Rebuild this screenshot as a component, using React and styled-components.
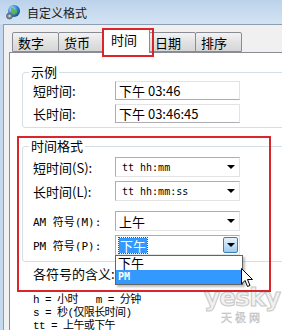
import React from 'react';
import styled, {createGlobalStyle} from 'styled-components';

const GlobalStyle = createGlobalStyle`
    html, body {
        margin: 0;
        padding: 0;
        background: #f0f0f0;
    }

    body {
        width: 282px;
        height: 330px;
        overflow: hidden;
        font-family: 'Noto Sans CJK SC', 'Liberation Sans', sans-serif;
        font-size: 12px;
        color: #000;
    }
`

const Window = styled.div`
    position: relative;
    width: 282px;
    height: 330px;
    overflow: hidden;
    background: #c4d8ef;
`

const TitleBar = styled.div`
    display: flex;
    align-items: center;
    gap: 6px;
    height: 24px;
    padding-left: 5px;
    background: linear-gradient(#bcd2eb, #d3e3f3);
    font-size: 12px;
    color: #1a1a1a;
`

const Client = styled.div`
    margin-left: 3px;
    height: 306px;
    background: #f0f0f0;
    border-top: 1px solid #8d9db1;
    border-left: 1px solid #8d9db1;
`

const TabStrip = styled.div`
    display: flex;
    align-items: flex-end;
    height: 27px;
    padding-left: 8px;
`

const Tab = styled.div`
    position: relative;
    box-sizing: border-box;
    width: ${p => (p.active ? '48px' : '47px')};
    height: ${p => (p.active ? '25px' : '20px')};
    margin: ${p => (p.active ? '0 -1px -1px -2px' : '0 -1px 0 0')};
    padding-left: ${p => (p.active ? '8px' : '5px')};
    line-height: ${p => (p.active ? '22px' : '20px')};
    font-size: 13px;
    background: ${p => (p.active ? '#fff' : 'linear-gradient(#f3f3f3, #e2e2e2 50%, #d6d6d6)')};
    border: 1px solid #898c95;
    border-bottom: ${p => (p.active ? 'none' : '1px solid #898c95')};
    border-radius: 2px 2px 0 0;
    z-index: ${p => (p.active ? 2 : 1)};
`

const Panel = styled.div`
    position: relative;
    width: 300px;
    height: 290px;
    margin-left: 5px;
    padding-left: 12px;
    background: #fff;
    border-top: 1px solid #898c95;
    border-left: 1px solid #898c95;
`

const Group = styled.fieldset`
    width: 270px;
    margin: ${p => p.top}px 0 0 0;
    padding: ${p => p.padTop}px 0 ${p => p.padBottom}px 10px;
    border: 1px solid #d5dfe5;
    border-radius: 3px;
`

const Legend = styled.legend`
    margin-left: -4px;
    padding: 0 2px;
    height: 14px;
    line-height: 14px;
    font-size: 13px;
`

const Row = styled.div`
    display: flex;
    align-items: center;
    margin-top: ${p => p.gap || 0}px;
`

const Label = styled.div`
    width: 82px;
    font-size: ${p => (p.small ? '11px' : '13px')};
    font-family: ${p => (p.small ? "'DejaVu Sans Mono', 'Noto Sans CJK SC', monospace" : "'Noto Sans CJK SC', sans-serif")};
    white-space: nowrap;
`

const TextBox = styled.div`
    box-sizing: border-box;
    width: 125px;
    height: 19px;
    padding-left: 3px;
    line-height: 17px;
    font-size: 13px;
    border: 1px solid #abadb3;
    border-top-color: #e3e3e3;
    border-right-color: #e3e3e3;
    white-space: pre;
`

const Combo = styled.div`
    position: relative;
    box-sizing: border-box;
    display: flex;
    align-items: center;
    width: 125px;
    height: 20px;
    padding: 0 1px;
    border: 1px solid #abadb3;
    border-right-color: #e3e3e3;
    border-bottom-color: #e3e3e3;
    background: #fff;
`

const ComboText = styled.div`
    flex: 1;
    padding-left: ${p => (p.mono ? '5px' : '2px')};
    font-family: ${p => (p.mono ? "'DejaVu Sans Mono', monospace" : "'Noto Sans CJK SC', sans-serif")};
    font-size: ${p => (p.mono ? '10px' : '13px')};
    white-space: pre;
`

const Selected = styled.span`
    display: inline-block;
    padding: 0 1px;
    line-height: 15px;
    background: #3399ff;
    color: #fff;
    outline: 1px dotted #1c5a9a;
`

const Arrow = styled.div`
    width: 15px;
    height: 16px;
    display: flex;
    align-items: center;
    justify-content: center;
    box-sizing: border-box;
    border: ${p => (p.open ? '1px solid #3c7fb1' : 'none')};
    border-radius: 2px;
    background: ${p => (p.open ? 'linear-gradient(#e5f1fb, #c4e0f6 50%, #9dcaee)' : 'transparent')};

    &::after {
        content: '';
        border-left: 4px solid transparent;
        border-right: 4px solid transparent;
        border-top: 4px solid #000;
    }
`

const DropList = styled.div`
    position: absolute;
    left: -1px;
    top: 19px;
    width: 126px;
    background: #fff;
    border: 1px solid #646464;
    box-shadow: 2px 2px 2px rgba(0, 0, 0, 0.25);
    z-index: 3;
`

const Option = styled.div`
    height: 14px;
    padding-left: 2px;
    line-height: 14px;
    font-family: ${p => (p.mono ? "'DejaVu Sans Mono', monospace" : "'Noto Sans CJK SC', sans-serif")};
    font-size: ${p => (p.mono ? '10px' : '13px')};
    font-weight: ${p => (p.mono ? 700 : 400)};
    background: ${p => (p.active ? '#3399ff' : '#fff')};
    color: ${p => (p.active ? '#fff' : '#000')};
`

const Meaning = styled.div`
    margin: 5px 0 0 11px;
    height: 14px;
    line-height: 14px;
    font-size: 13px;
`

const Notes = styled.div`
    margin: 13px 0 0 11px;
    font-family: 'Liberation Mono', 'Noto Sans CJK SC', monospace;
    font-size: 11px;
    line-height: 13px;
    letter-spacing: -0.6px;
    white-space: pre;
`

const RedBox = styled.div`
    position: absolute;
    left: ${p => p.x}px;
    top: ${p => p.y}px;
    width: ${p => p.w}px;
    height: ${p => p.h}px;
    border: 2px solid #d8262b;
    box-sizing: border-box;
    z-index: 5;
    pointer-events: none;
`

const Watermark = styled.div`
    position: absolute;
    left: 204px;
    top: 286px;
    display: flex;
    flex-direction: column;
    align-items: center;
    color: rgba(235, 235, 235, 0.7);
    -webkit-text-stroke: 1px #c8c8c8;
    z-index: 4;

    b {
        font-family: 'DejaVu Sans', sans-serif;
        font-size: 25px;
        line-height: 24px;
        letter-spacing: -1px;
    }

    span {
        margin-top: 1px;
        font-size: 11px;
        line-height: 12px;
        letter-spacing: 3px;
        -webkit-text-stroke: 0.5px #bdbdbd;
    }
`

const Cursor = styled.svg`
    position: absolute;
    left: 241px;
    top: 268px;
    z-index: 6;
`

const AppIcon = () => (
    <svg width='16' height='16' viewBox='0 0 16 16'>
        <defs>
            <radialGradient id='globe' cx='0.35' cy='0.35' r='0.7'>
                <stop offset='0' stopColor='#bfe6ff'/>
                <stop offset='0.6' stopColor='#2f86d6'/>
                <stop offset='1' stopColor='#13508f'/>
            </radialGradient>
        </defs>
        <circle cx='9' cy='7' r='6' fill='url(#globe)'/>
        <path d='M6 4 q2 -1 3 1 q1 2 3 1 l0 3 q-2 0 -3 2 q-2 0 -3 -3z' fill='#5fb34a' opacity='0.9'/>
        <circle cx='4.5' cy='12' r='3' fill='#7a8a99' stroke='#4d5a66' strokeWidth='0.8'/>
        <circle cx='4.5' cy='12' r='1' fill='#dfe6ec'/>
    </svg>
);

const App = () => {
    return (
        <Window>
            <GlobalStyle/>
            <TitleBar>
                <AppIcon/>
                <span>自定义格式</span>
            </TitleBar>
            <Client>
                <TabStrip>
                    <Tab>数字</Tab>
                    <Tab>货币</Tab>
                    <Tab active>时间</Tab>
                    <Tab>日期</Tab>
                    <Tab>排序</Tab>
                </TabStrip>
                <Panel>
                    <Group top={12} padTop={2} padBottom={4}>
                        <Legend>示例</Legend>
                        <Row>
                            <Label>短时间:</Label>
                            <TextBox>下午 03:46</TextBox>
                        </Row>
                        <Row gap={4}>
                            <Label>长时间:</Label>
                            <TextBox>下午 03:46:45</TextBox>
                        </Row>
                    </Group>

                    <Group top={11} padTop={4} padBottom={6}>
                        <Legend>时间格式</Legend>
                        <Row>
                            <Label>短时间(S):</Label>
                            <Combo><ComboText mono>tt hh:mm</ComboText><Arrow/></Combo>
                        </Row>
                        <Row gap={4}>
                            <Label>长时间(L):</Label>
                            <Combo><ComboText mono>tt hh:mm:ss</ComboText><Arrow/></Combo>
                        </Row>
                        <Row gap={10}>
                            <Label small>AM 符号(M):</Label>
                            <Combo><ComboText>上午</ComboText><Arrow/></Combo>
                        </Row>
                        <Row gap={4}>
                            <Label small>PM 符号(P):</Label>
                            <Combo>
                                <ComboText><Selected>下午</Selected></ComboText>
                                <Arrow open/>
                                <DropList>
                                    <Option>下午</Option>
                                    <Option mono active>PM</Option>
                                </DropList>
                            </Combo>
                        </Row>
                    </Group>

                    <Meaning>各符号的含义:</Meaning>
                    <Notes>
                        {'h = 小时   m = 分钟\ns = 秒(仅限长时间)\ntt = 上午或下午'}
                    </Notes>
                </Panel>
            </Client>

            <RedBox x={102} y={28} w={52} h={29}/>
            <RedBox x={17} y={136} w={254} h={156}/>

            <Watermark>
                <b>yesky</b>
                <span>天极网</span>
            </Watermark>

            <Cursor width='13' height='21' viewBox='0 0 13 21'>
                <path d='M0.5 0.5 L0.5 16 L4 12.5 L6.5 18.5 L9 17.5 L6.5 11.5 L11.5 11.5 Z' fill='#fff' stroke='#000' strokeWidth='1'/>
            </Cursor>
        </Window>
    );
};

export default App;
